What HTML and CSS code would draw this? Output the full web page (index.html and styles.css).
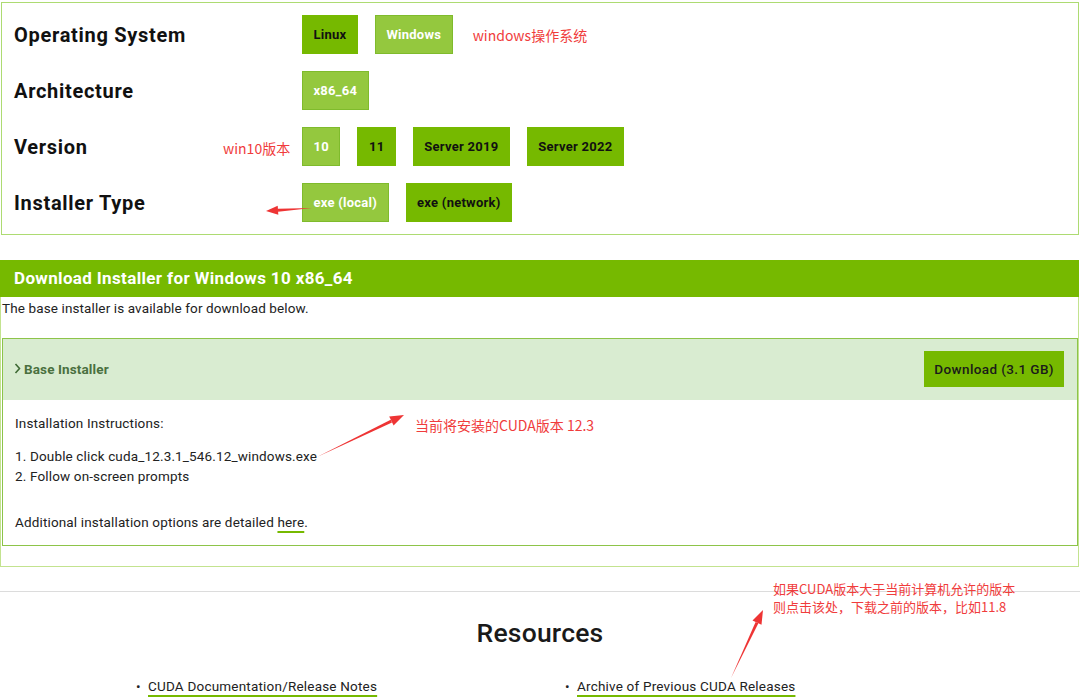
FILE: index.html
```html
<!DOCTYPE html>
<html lang="en">
<head>
<meta charset="utf-8">
<title>CUDA Toolkit Downloads</title>
<link rel="stylesheet" href="styles.css">
</head>
<body>
<div class="page">
  <section class="selector">
    <div class="row">
      <div class="label">Operating System</div>
      <div class="opts">
        <span class="btn">Linux</span>
        <span class="btn sel">Windows</span>
        <span class="note note-os">windows操作系统</span>
      </div>
    </div>
    <div class="row">
      <div class="label">Architecture</div>
      <div class="opts">
        <span class="btn sel">x86_64</span>
      </div>
    </div>
    <div class="row">
      <div class="label">Version<span class="note note-win">win10版本</span></div>
      <div class="opts">
        <span class="btn sel">10</span>
        <span class="btn">11</span>
        <span class="btn">Server 2019</span>
        <span class="btn">Server 2022</span>
      </div>
    </div>
    <div class="row">
      <div class="label">Installer Type</div>
      <div class="opts">
        <span class="btn sel">exe (local)</span>
        <span class="btn">exe (network)</span>
      </div>
    </div>
  </section>

  <section class="download">
    <h2 class="dl-head">Download Installer for Windows 10 x86_64</h2>
    <div class="dl-body">
      <p class="dl-intro">The base installer is available for download below.</p>
      <div class="installer">
        <div class="inst-head">
          <span class="inst-title">
            <svg class="chev" width="7" height="11" viewBox="0 0 7 11"><polyline points="1.5,1 5.5,5.5 1.5,10" fill="none" stroke="#3f6a35" stroke-width="1.6"/></svg>
            Base Installer
          </span>
          <a class="dl-btn">Download (3.1 GB)</a>
        </div>
        <div class="inst-body">
          <p class="inst-p">Installation Instructions:</p>
          <ol class="steps">
            <li>1. Double click cuda_12.3.1_546.12_windows.exe</li>
            <li>2. Follow on-screen prompts</li>
          </ol>
          <p class="inst-p extra">Additional installation options are detailed <a class="link">here</a>.</p>
          <span class="note note-ver">当前将安装的CUDA版本 12.3</span>
        </div>
      </div>
    </div>
  </section>

  <section class="resources">
    <h2 class="res-title">Resources</h2>
    <ul class="res-list">
      <li><a class="link">CUDA Documentation/Release Notes</a></li>
      <li><a class="link">Archive of Previous CUDA Releases</a></li>
    </ul>
    <div class="note note-archive">如果CUDA版本大于当前计算机允许的版本<br>则点击该处，下载之前的版本，比如11.8</div>
  </section>

  <svg class="arrows" width="1080" height="700" viewBox="0 0 1080 700">
    <g fill="#ee3434">
      <polygon points="312,208 278.1,211.7 277.9,208.7"/>
      <polygon points="266,211 278.3,214.7 277.7,205.7"/>
      <polygon points="317,457 392,422.5 390.7,419.7"/>
      <polygon points="404,415 393.6,425.6 389.2,416.6"/>
      <polygon points="731,678 758.4,623.3 755.6,622.1"/>
      <polygon points="763,610 761.5,624.8 752.5,620.6"/>
    </g>
  </svg>
</div>
</body>
</html>
```

FILE: styles.css
```css
* { box-sizing: border-box; }

html, body {
  margin: 0;
  padding: 0;
  background: #fff;
}

body {
  font-family: Roboto, "Liberation Sans", Arial, sans-serif;
  color: #1a1a1a;
  overflow: hidden;
}

.page {
  position: relative;
  width: 1080px;
  height: 700px;
  overflow: hidden;
}

/* ---------- selector ---------- */
.selector {
  margin: 2px 0 0 1px;
  width: 1078px;
  border: 1px solid #addb72;
  padding: 12px 12px 12px 12px;
  display: flex;
  flex-direction: column;
  gap: 17px;
}

.row {
  display: flex;
  align-items: center;
  height: 39px;
}

.label {
  position: relative;
  width: 288px;
  flex: none;
  font-size: 20px;
  font-weight: 700;
  letter-spacing: 0.7px;
  color: #111;
}

.opts {
  display: flex;
  align-items: center;
  gap: 17px;
  height: 39px;
}

.btn {
  display: flex;
  align-items: center;
  height: 39px;
  padding: 0 10.5px;
  font-size: 13px;
  font-weight: 700;
  letter-spacing: 0.25px;
  color: #111;
  background: #76b900;
  border: 1px solid #76b900;
}

.btn.sel {
  background: #94c83e;
  border-color: #7fbb2c;
  color: #fff;
}

.note {
  font-family: "Noto Sans CJK SC", "Noto Sans", sans-serif;
  color: #f03c3c;
  font-size: 14px;
  font-weight: 400;
  letter-spacing: 0;
  white-space: nowrap;
}

.note-os {
  margin-left: 3px;
}

.note-win {
  position: absolute;
  left: 209px;
  top: 3px;
}

/* ---------- download ---------- */
.download {
  margin-top: 25px;
  width: 1080px;
}

.dl-head {
  margin: 0;
  height: 37px;
  background: #76b900;
  color: #fff;
  font-size: 17px;
  font-weight: 700;
  letter-spacing: 0.35px;
  line-height: 37px;
  padding-left: 14px;
  width: 1079px;
}

.dl-body {
  width: 1079px;
  border: 1px solid #c3e38f;
  border-top: none;
  padding: 0 0 20px 1px;
  font-size: 13.5px;
  letter-spacing: 0.12px;
}

.dl-intro {
  margin: 0;
  padding-top: 1px;
  line-height: 20px;
  color: #222;
}

.installer {
  margin-top: 20px;
  border: 1px solid #8dc449;
}

.inst-head {
  height: 61px;
  background: #d9ecd1;
  display: flex;
  align-items: center;
  justify-content: space-between;
  padding: 0 13px 2px 11px;
}

.inst-title {
  display: flex;
  align-items: center;
  gap: 3px;
  font-weight: 700;
  color: #4a7040;
}

.dl-btn {
  display: flex;
  align-items: center;
  height: 36px;
  padding: 0 10px;
  background: #76b900;
  color: #1a1a1a;
  font-size: 13.5px;
  font-weight: 500;
  letter-spacing: 0.4px;
}

.inst-body {
  position: relative;
  padding: 13px 12px 13px 12px;
  color: #222;
  letter-spacing: 0.15px;
}

.inst-p {
  margin: 0;
  line-height: 20px;
}

.steps {
  list-style: none;
  margin: 13px 0 0 0;
  padding: 0;
  line-height: 20px;
}

.extra {
  margin-top: 26px;
}

.link {
  color: #222;
  text-decoration: underline;
  text-decoration-color: #76b900;
  text-decoration-thickness: 2px;
  text-underline-offset: 4px;
}

.note-ver {
  position: absolute;
  left: 412px;
  top: 15px;
}

/* ---------- resources ---------- */
.resources {
  position: relative;
  margin-top: 24px;
  border-top: 1px solid #dcdcdc;
  padding-top: 25px;
}

.res-title {
  margin: 0;
  text-align: center;
  font-size: 26.5px;
  line-height: 32px;
  font-weight: 500;
  letter-spacing: 0.2px;
  color: #1a1a1a;
}

.res-list {
  list-style: none;
  margin: 27px 0 0 0;
  padding: 0 0 0 136px;
  display: grid;
  grid-template-columns: 429px 429px;
  font-size: 13.5px;
  letter-spacing: 0.2px;
  line-height: 20px;
}

.res-list li::before {
  content: "\2022";
  display: inline-block;
  width: 12px;
  color: #222;
}

.note-archive {
  position: absolute;
  left: 773px;
  top: -12px;
  font-size: 13px;
  line-height: 18px;
}

.arrows {
  position: absolute;
  left: 0;
  top: 0;
  pointer-events: none;
}
```
